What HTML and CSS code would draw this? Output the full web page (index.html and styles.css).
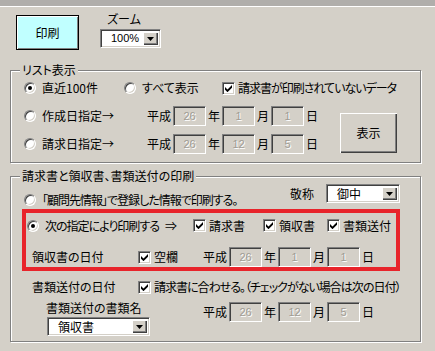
FILE: index.html
```html
<!DOCTYPE html>
<html lang="ja">
<head>
	<meta charset="UTF-8">
	<title>請求書の印刷</title>
	<link rel="stylesheet" href="styles.css">
</head>
<body>
	<div class="titlebar"></div>

	<div class="toolbar">
		<button class="btn btn-print">印刷</button>
		<div class="zoom">
			<div class="zoom-label">ズーム</div>
			<div class="combo combo-zoom">
				<span class="combo-text center">100%</span>
				<span class="combo-btn"><svg width="7" height="4" viewBox="0 0 7 4"><polygon points="0,0 7,0 3.5,4"/></svg></span>
			</div>
		</div>
	</div>

	<section class="group group-list">
		<span class="group-title">リスト表示</span>
		<div class="list-grid">
			<div class="row row-first">
				<label class="opt w100"><span class="radio on"></span>直近100件</label>
				<label class="opt w98"><span class="radio"></span>すべて表示</label>
				<label class="opt tight"><span class="check"><svg width="7" height="7" viewBox="0 0 7 7"><polygon points="0,2 2.5,4.5 7,0 7,2.8 2.5,7.2 0,4.8"/></svg></span>請求書が印刷されていないデータ</label>
			</div>
			<div class="row">
				<label class="opt w123"><span class="radio"></span>作成日指定→</label>
				<div class="date">
					<span class="era">平成</span><span class="field">26</span><span class="unit">年</span><span class="field">1</span><span class="unit">月</span><span class="field">1</span><span class="unit">日</span>
				</div>
			</div>
			<div class="row">
				<label class="opt w123"><span class="radio"></span>請求日指定→</label>
				<div class="date">
					<span class="era">平成</span><span class="field">26</span><span class="unit">年</span><span class="field">12</span><span class="unit">月</span><span class="field">5</span><span class="unit">日</span>
				</div>
			</div>
			<button class="btn btn-show">表示</button>
		</div>
	</section>

	<section class="group group-print">
		<span class="group-title">請求書と領収書、書類送付の印刷</span>

		<div class="row-source">
			<label class="opt opt-source tight"><span class="radio"></span>「顧問先情報」で登録した情報で印刷する。</label>
			<span class="honorific">敬称</span>
			<div class="combo combo-honorific">
				<span class="combo-text">御中</span>
				<span class="combo-btn"><svg width="7" height="4" viewBox="0 0 7 4"><polygon points="0,0 7,0 3.5,4"/></svg></span>
			</div>
		</div>

		<div class="marked">
			<div class="marked-row">
				<label class="opt w138 tight"><span class="radio on"></span>次の指定により印刷する</label>
				<span class="arrow">⇒</span>
				<label class="opt w70"><span class="check"><svg width="7" height="7" viewBox="0 0 7 7"><polygon points="0,2 2.5,4.5 7,0 7,2.8 2.5,7.2 0,4.8"/></svg></span>請求書</label>
				<label class="opt w64"><span class="check"><svg width="7" height="7" viewBox="0 0 7 7"><polygon points="0,2 2.5,4.5 7,0 7,2.8 2.5,7.2 0,4.8"/></svg></span>領収書</label>
				<label class="opt"><span class="check"><svg width="7" height="7" viewBox="0 0 7 7"><polygon points="0,2 2.5,4.5 7,0 7,2.8 2.5,7.2 0,4.8"/></svg></span>書類送付</label>
			</div>
			<div class="marked-row marked-date">
				<span class="caption">領収書の日付</span>
				<label class="opt w65"><span class="check"><svg width="7" height="7" viewBox="0 0 7 7"><polygon points="0,2 2.5,4.5 7,0 7,2.8 2.5,7.2 0,4.8"/></svg></span>空欄</label>
				<div class="date">
					<span class="era">平成</span><span class="field">26</span><span class="unit">年</span><span class="field">1</span><span class="unit">月</span><span class="field">1</span><span class="unit">日</span>
				</div>
			</div>
		</div>

		<div class="row-send">
			<span class="caption">書類送付の日付</span>
			<label class="opt tight"><span class="check"><svg width="7" height="7" viewBox="0 0 7 7"><polygon points="0,2 2.5,4.5 7,0 7,2.8 2.5,7.2 0,4.8"/></svg></span>請求書に合わせる。（チェックがない場合は次の日付）</label>
		</div>

		<div class="row-docname">
			<div class="docname">
				<div class="docname-label">書類送付の書類名</div>
				<div class="combo combo-doc">
					<span class="combo-text">領収書</span>
					<span class="combo-btn"><svg width="7" height="4" viewBox="0 0 7 4"><polygon points="0,0 7,0 3.5,4"/></svg></span>
				</div>
			</div>
			<div class="date date-send">
				<span class="era">平成</span><span class="field">26</span><span class="unit">年</span><span class="field">12</span><span class="unit">月</span><span class="field">5</span><span class="unit">日</span>
			</div>
		</div>
	</section>
</body>
</html>
```

FILE: styles.css
```css
* {margin:0; padding:0; box-sizing:border-box;}
body {background:#d4d0c8; color:#000; font:12px/14px "Noto Sans CJK JP", sans-serif; font-feature-settings:"palt"; width:435px; height:351px; overflow:hidden; white-space:nowrap;}

.titlebar {height:7px; background:#b0aeab; border-bottom:1px solid #fff;}

/* buttons */
.btn {font:inherit; color:#000; border:none; cursor:pointer; background:#d4d0c8; box-shadow:inset 1px 1px 0 #fff, inset -1px -1px 0 #404040, inset -2px -2px 0 #808080;}
.btn-print {width:63px; height:35px; background:#c0ffff; border:1px solid #000; box-shadow:inset 1px 1px 0 #fff, inset -1px -1px 0 #808080;}
.btn-show {grid-column:2; grid-row:2 / 4; width:57px; height:40px; margin:11px 0 5px;}

.toolbar {display:flex; align-items:flex-start; padding:8px 0 0 16px; height:43px;}
.zoom {margin:-3px 0 0 21px;}
.zoom-label {padding-left:7px;}

/* combo box */
.combo {display:flex; align-items:stretch; background:#fff; border:1px solid; border-color:#808080 #fff #fff #808080; box-shadow:inset 1px 1px 0 #404040, inset -1px -1px 0 #d4d0c8; padding:2px;}
.combo-text {flex:1; line-height:13px; padding-left:8px;}
.combo-text.center {text-align:center; padding:0 0 0 4px; font-family:"Liberation Sans", sans-serif; font-size:11px;}
.combo-btn {width:15px; display:flex; align-items:center; justify-content:center; background:#d4d0c8; box-shadow:inset 1px 1px 0 #fff, inset -1px -1px 0 #404040, inset -2px -2px 0 #808080;}
.combo-zoom {width:61px; height:19px; margin-top:3px;}
.combo-honorific {width:74px; height:19px; margin-top:7px;}
.combo-doc {width:103px; height:19px; margin:2px 0 0 1px;}

/* group boxes */
.group {position:relative; margin-left:10px; width:411px; border:1px solid #808080; box-shadow:inset 1px 1px 0 #fff, 1px 1px 0 #fff;}
.group-title {position:absolute; top:-8px; left:9px; padding:0 2px; background:#d4d0c8;}
.group-list {margin-top:20px; padding:3px 0 4px 13px;}
.group-print {margin-top:13px; padding:0 20px 5px 11px;}

.list-grid {display:grid; grid-template-columns:316px 57px; grid-template-rows:28px 28px 28px;}
.row {grid-column:1; display:flex; align-items:center;}
.row-first {grid-column:1 / 3;}

/* radio and check */
.opt {display:flex; align-items:center; flex-shrink:0;}
.tight {letter-spacing:-1px;}
.radio {width:12px; height:12px; margin-right:6px; border-radius:50%; background:#fff; border:1px solid; border-color:#808080 #fff #fff #808080; box-shadow:inset 1px 1px 0 #404040, inset -1px -1px 0 #d4d0c8; display:flex; align-items:center; justify-content:center;}
.radio.on::after {content:""; width:4px; height:4px; border-radius:50%; background:#000;}
.check {width:13px; height:13px; margin-right:3px; background:#fff; border:1px solid; border-color:#808080 #fff #fff #808080; box-shadow:inset 1px 1px 0 #404040, inset -1px -1px 0 #d4d0c8; display:flex; align-items:center; justify-content:center;}
.w100 {width:100px;}
.w98 {width:98px;}
.w123 {width:123px;}
.w138 {width:138px;}
.w70 {width:70px;}
.w64 {width:64px;}
.w65 {width:65px;}

/* date fields */
.date {display:flex; align-items:center;}
.era {margin-right:2px;}
.unit {margin:0 2px;}
.field {width:33px; height:20px; border:1px solid; border-color:#808080 #fff #fff #808080; box-shadow:inset 1px 1px 0 #404040, inset -1px -1px 0 #d4d0c8; text-align:center; font:11px/18px "Liberation Sans", sans-serif; color:#a09c94; text-shadow:1px 1px 0 #fff;}

/* print group rows */
.row-source {display:flex; align-items:flex-start; height:32px;}
.opt-source {margin:16px 0 0 2px;}
.honorific {margin:10px 12px 0 auto;}

.marked {border:4px solid #e8242b; height:62px;}
.marked-row {display:flex; align-items:center; height:25px; padding-left:1px;}
.arrow {width:28px; flex-shrink:0;}
.marked-date {height:29px; padding:9px 0 0 6px;}
.caption {width:106px; flex-shrink:0;}

.row-send {display:flex; align-items:center; height:24px; padding:8px 0 0 10px;}

.row-docname {display:flex; align-items:flex-start; height:41px; padding-left:24px;}
.docname {width:157px;}
.docname-label {margin-top:6px;}
.date-send {margin-top:7px;}
```
